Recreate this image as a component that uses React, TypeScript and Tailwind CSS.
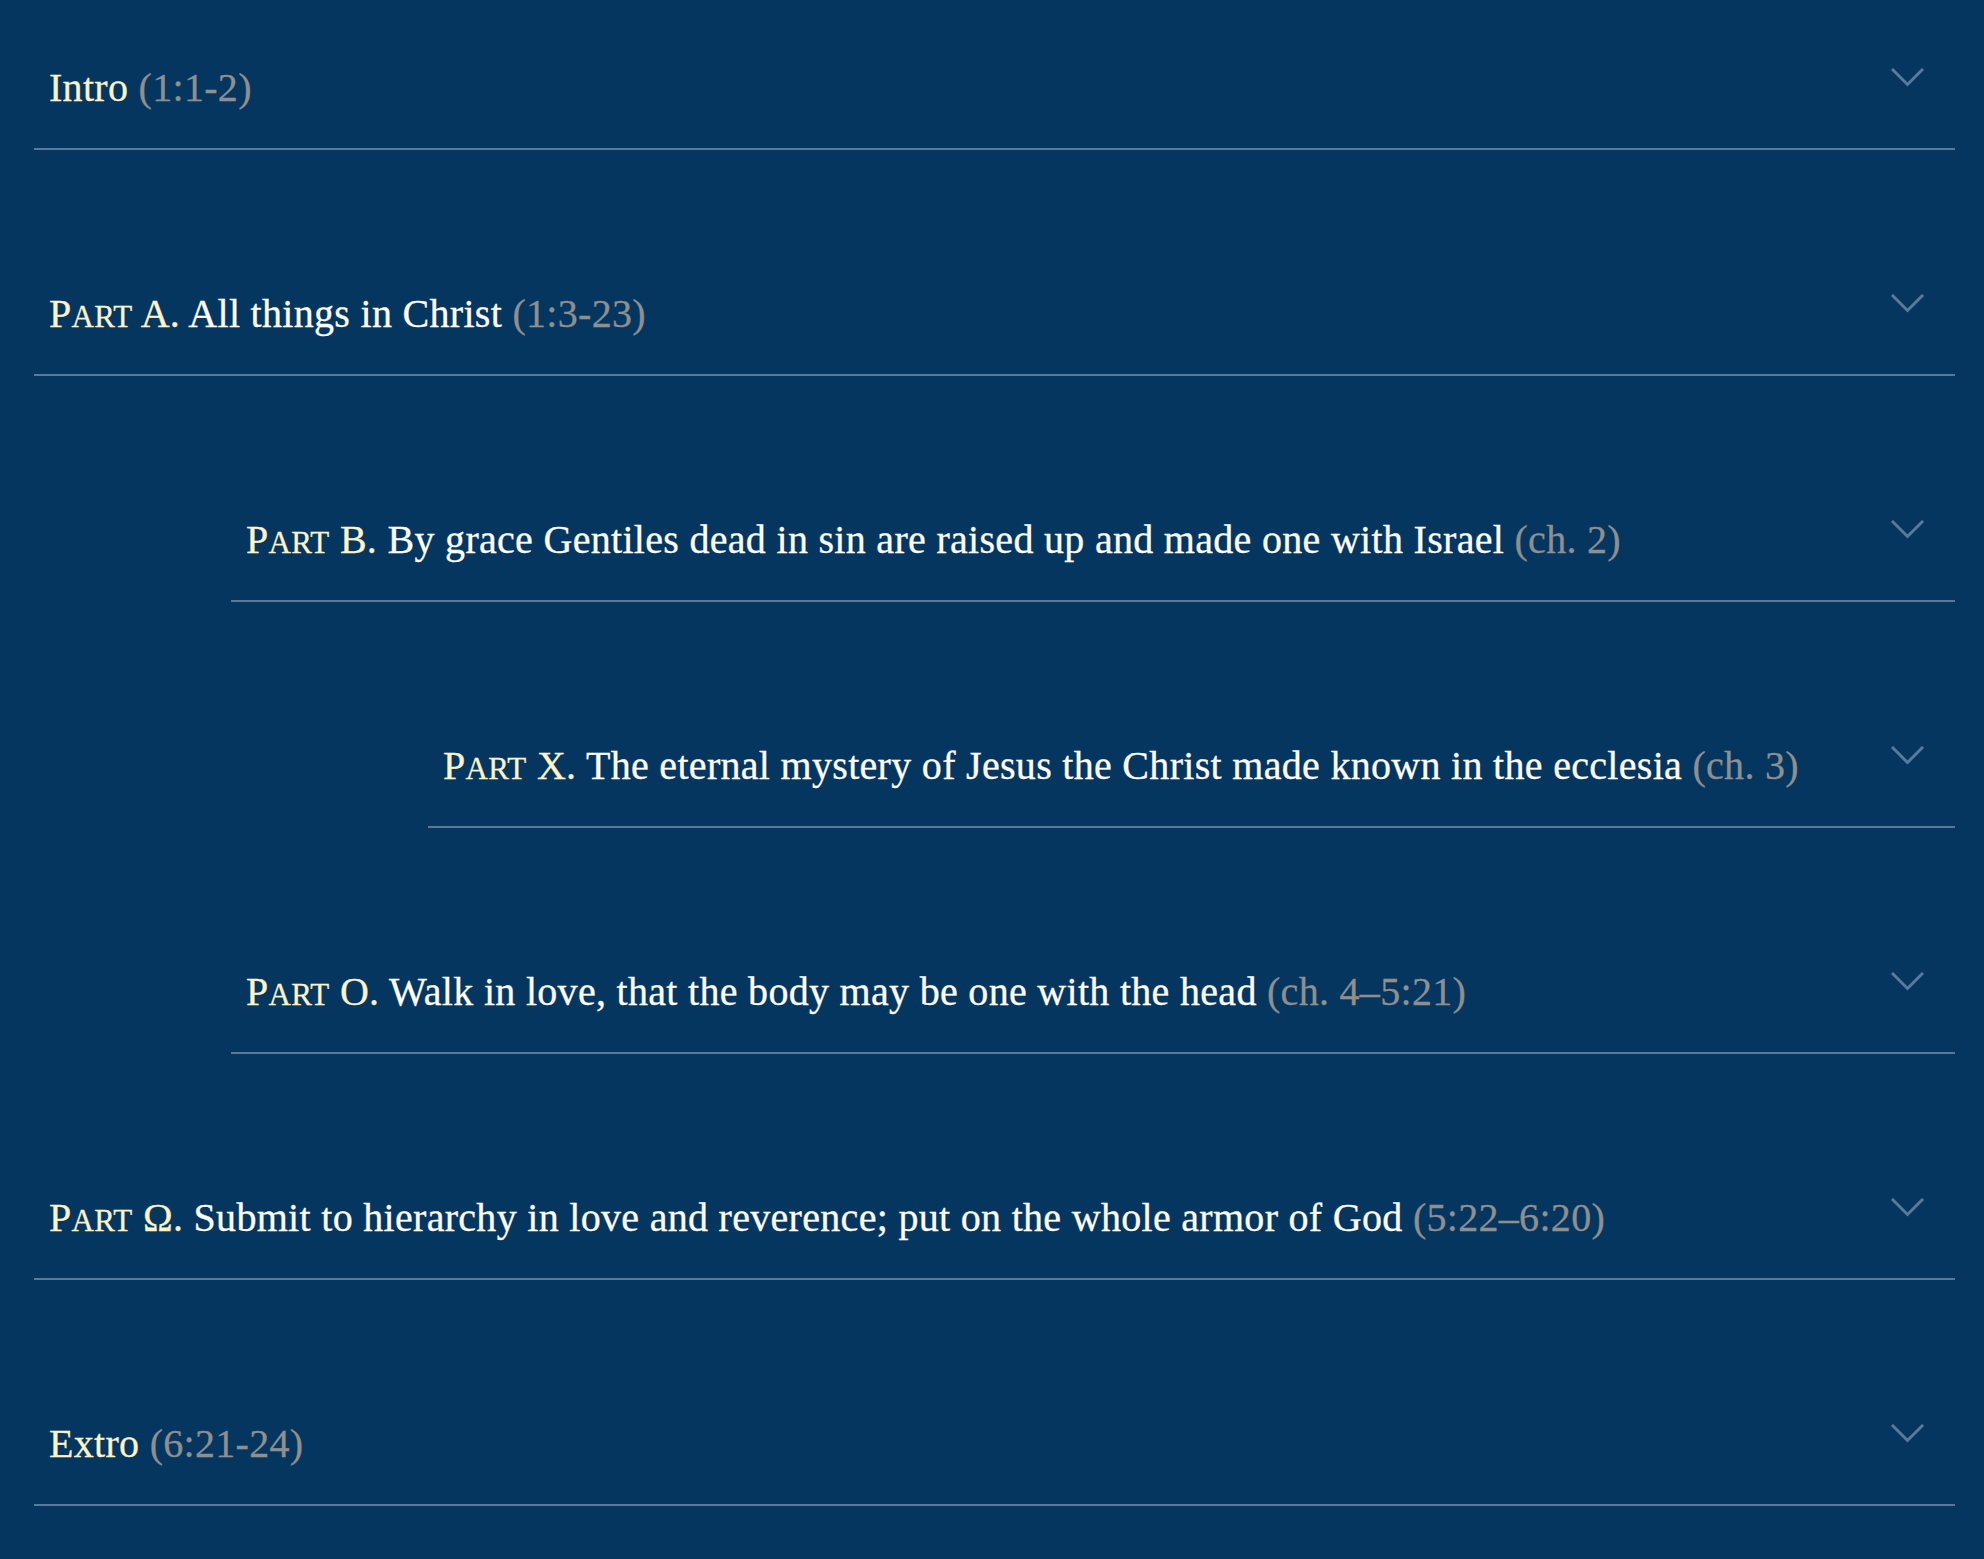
import React from "react";

type Item = { level: number; label?: [string, string, string]; title: string; ref: string; intro?: boolean };

const items: Item[] = [
  { level: 0, intro: true, title: "Intro", ref: "(1:1-2)" },
  { level: 0, label: ["P", "ART", " A."], title: "All things in Christ", ref: "(1:3-23)" },
  { level: 1, label: ["P", "ART", " B."], title: "By grace Gentiles dead in sin are raised up and made one with Israel", ref: "(ch. 2)" },
  { level: 2, label: ["P", "ART", " X."], title: "The eternal mystery of Jesus the Christ made known in the ecclesia", ref: "(ch. 3)" },
  { level: 1, label: ["P", "ART", " O."], title: "Walk in love, that the body may be one with the head", ref: "(ch. 4–5:21)" },
  { level: 0, label: ["P", "ART", " Ω."], title: "Submit to hierarchy in love and reverence; put on the whole armor of God", ref: "(5:22–6:20)" },
  { level: 0, intro: true, title: "Extro", ref: "(6:21-24)" },
];

const indent = ["ml-0", "ml-[197px]", "ml-[394px]"];

function Chevron() {
  return (
    <svg width="33" height="20" viewBox="0 0 33 20" className="block shrink-0">
      <polyline points="2,2 16.5,16.5 31,2" fill="none" stroke="#5a7a9b" strokeWidth="3" strokeLinecap="square" />
    </svg>
  );
}

export default function App() {
  return (
    <div
      className="min-h-[1559px] w-full bg-[#05365f] pl-[34px] pr-[29px]"
      style={{ fontFamily: '"Liberation Serif", "Times New Roman", serif' }}
    >
      <div className="flex flex-col gap-[76px]">
        {items.map((it, i) => (
          <div
            key={i}
            className={`${indent[it.level]} flex h-[150px] items-start justify-between border-b-2 border-[#587999] pl-[15px] pr-[31px]`}
          >
            <div className="pt-[64px] text-[40px] leading-[48px] tracking-[0.3px] text-white [-webkit-text-stroke:0.3px_currentColor]">
              {it.intro ? (
                <span className="text-[#fdf2c8]">{it.title}</span>
              ) : (
                <>
                  <span className="text-[#fdf2c8]">
                    {it.label![0]}
                    <span className="text-[31px]">{it.label![1]}</span>
                    {it.label![2]}
                  </span>{" "}
                  <span>{it.title}</span>
                </>
              )}{" "}
              <span className="text-[#8f8f8f]">{it.ref}</span>
            </div>
            <div className="pt-[68px]">
              <Chevron />
            </div>
          </div>
        ))}
      </div>
    </div>
  );
}
